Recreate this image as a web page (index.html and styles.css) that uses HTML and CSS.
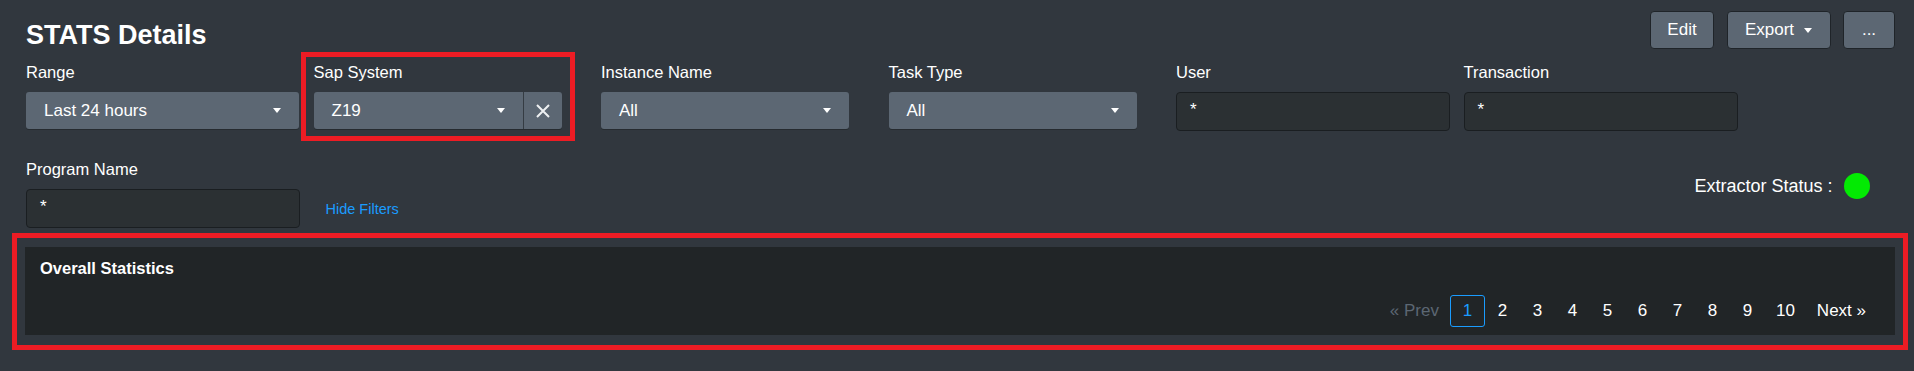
FILE: index.html
```html
<!DOCTYPE html>
<html>
<head>
<meta charset="UTF-8">
<title>STATS Details</title>
<link rel="stylesheet" href="styles.css">
</head>
<body>
	<div id="page">
		<div class="entete">
			<h1 class="titre">STATS Details</h1>
			<div class="actions">
				<button class="bouton bouton_edit">Edit</button>
				<button class="bouton bouton_export">Export <span class="caret"></span></button>
				<button class="bouton bouton_plus">...</button>
			</div>
		</div>

		<div class="filtres">
			<div class="ligne">
				<div class="champ">
					<label>Range</label>
					<div class="liste liste_large"><span>Last 24 hours</span><span class="caret"></span></div>
				</div>
				<div class="champ annote">
					<label>Sap System</label>
					<div class="groupe">
						<div class="liste"><span>Z19</span><span class="caret"></span></div>
						<button class="effacer" title="Effacer">
							<svg width="14" height="14" viewBox="0 0 14 14"><path d="M1 1 L13 13 M13 1 L1 13" stroke="#eef0f2" stroke-width="2" fill="none"/></svg>
						</button>
					</div>
				</div>
				<div class="champ">
					<label>Instance Name</label>
					<div class="liste"><span>All</span><span class="caret"></span></div>
				</div>
				<div class="champ">
					<label>Task Type</label>
					<div class="liste"><span>All</span><span class="caret"></span></div>
				</div>
				<div class="champ">
					<label>User</label>
					<div class="saisie">*</div>
				</div>
				<div class="champ">
					<label>Transaction</label>
					<div class="saisie">*</div>
				</div>
			</div>
			<div class="ligne ligne_deux">
				<div class="champ">
					<label>Program Name</label>
					<div class="saisie">*</div>
				</div>
				<a href="#" class="lien_filtres">Hide Filters</a>
				<div class="statut">
					<span>Extractor Status :</span>
					<span class="voyant"></span>
				</div>
			</div>
		</div>

		<div class="cadre_rouge">
			<div class="panneau">
				<h2>Overall Statistics</h2>
				<div class="pagination">
					<span class="page_item desactive">&laquo; Prev</span>
					<span class="page_item actif">1</span>
					<span class="page_item">2</span>
					<span class="page_item">3</span>
					<span class="page_item">4</span>
					<span class="page_item">5</span>
					<span class="page_item">6</span>
					<span class="page_item">7</span>
					<span class="page_item">8</span>
					<span class="page_item">9</span>
					<span class="page_item">10</span>
					<span class="page_item">Next &raquo;</span>
				</div>
			</div>
		</div>
	</div>
</body>
</html>
```
FILE: styles.css
```css
html{
	height:100%;
}

body{
	margin:0;
	background:#31373e;
	color:#fff;
	font: 16.5px "Liberation Sans", Arial, Helvetica, sans-serif;
}

div#page{
	padding:0 19px 0 25px;
}

.entete{
	display:flex;
	justify-content:space-between;
	align-items:flex-start;
	padding-left:1px;
}

.titre{
	margin:0;
	padding-top:19px;
	font-size:27px;
	line-height:32px;
	font-weight:bold;
}

.actions{
	display:flex;
	gap:12.5px;
	padding-top:11px;
}

.bouton{
	height:38px;
	box-sizing:border-box;
	display:flex;
	align-items:center;
	justify-content:center;
	gap:10px;
	padding:0;
	background:#5c6773;
	border:1px solid #1f2429;
	border-radius:4px;
	color:#fff;
	font:17px "Liberation Sans", Arial, Helvetica, sans-serif;
}
.bouton_edit{ width:64px; }
.bouton_export{ width:104px; }
.bouton_plus{ width:52px; }

.caret{
	width:0;
	height:0;
	border-left:4px solid transparent;
	border-right:4px solid transparent;
	border-top:5px solid #fff;
}

.filtres{
	padding-left:1px;
	margin-top:11px;
}

.ligne{
	display:flex;
	gap:13.5px;
	align-items:flex-start;
}
.ligne_deux{
	margin-top:28px;
}

.champ{
	width:274px;
	position:relative;
}

label
{
	display:block;
	line-height:20px;
	margin-bottom:10px;
}

.liste{
	width:248px;
	height:37px;
	box-sizing:border-box;
	display:flex;
	align-items:center;
	justify-content:space-between;
	padding:0 18px;
	background:#5c6773;
	border-radius:3px;
	box-shadow:0 1px 0 #262b30;
	font-size:17px;
}
.liste_large{
	width:273px;
}

.groupe{
	display:flex;
	width:248px;
}
.groupe .liste{
	flex:1;
	width:auto;
	border-radius:3px 0 0 3px;
}
.effacer{
	width:39px;
	height:37px;
	padding:0;
	display:flex;
	align-items:center;
	justify-content:center;
	background:#5c6773;
	border:0;
	border-left:1px solid #353c43;
	border-radius:0 3px 3px 0;
	box-shadow:0 1px 0 #262b30;
}

.saisie{
	width:274px;
	height:39px;
	box-sizing:border-box;
	display:flex;
	align-items:center;
	padding:0 13px 4px;
	background:#2b3033;
	border:1px solid #1a1e21;
	border-radius:4px;
	font-size:17px;
}

.lien_filtres{
	margin:41px 0 0 12px;
	font-size:14.5px;
	line-height:18px;
	color:#1a9cff;
	text-decoration:none;
}

.statut{
	margin:14px 25px 0 auto;
	height:26px;
	display:flex;
	align-items:center;
	gap:11.5px;
	font-size:18px;
}
.voyant{
	width:26px;
	height:26px;
	border-radius:50%;
	background:#03ea03;
}

/* cadre rouge d'annotation autour du panneau */
.cadre_rouge{
	margin:5px -13px 0 -13px;
	padding:9px 8px 10px 8px;
	border:5px solid #ed1c24;
}

.panneau{
	padding:11px 18px 8px 15px;
	background:#212527;
}
.panneau h2{
	margin:0;
	font-size:16.5px;
	line-height:20px;
	font-weight:bold;
}

.pagination{
	display:flex;
	justify-content:flex-end;
	margin-top:16.5px;
}
.page_item{
	min-width:35px;
	height:32px;
	box-sizing:border-box;
	padding:0 10px;
	border:1px solid transparent;
	border-radius:3px;
	line-height:30px;
	text-align:center;
	font-size:17px;
	color:#fff;
}
.page_item.actif{
	border-color:#1a9cff;
	color:#1a9cff;
}
.page_item.desactive{
	color:#5c6773;
}

/* cadre rouge d'annotation autour du champ */
.annote::after{
	content:"";
	position:absolute;
	left:-12.5px;
	top:-10px;
	width:274px;
	height:89px;
	box-sizing:border-box;
	border:5px solid #ed1c24;
	pointer-events:none;
}
```
